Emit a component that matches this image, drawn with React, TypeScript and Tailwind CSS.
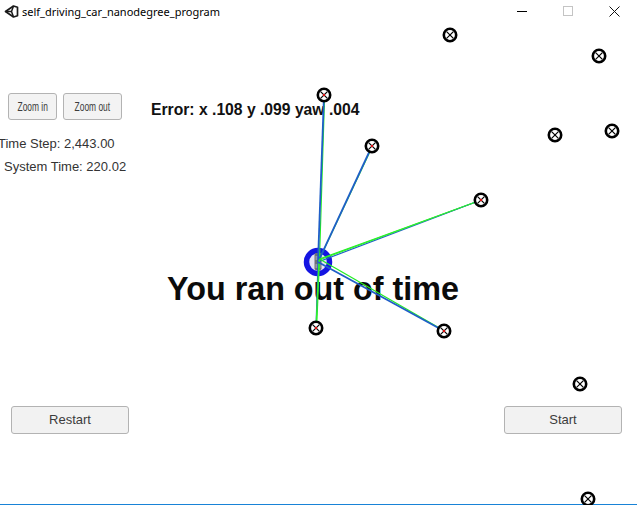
import React from 'react';

type Pt = [number, number];

const CAR: Pt = [318, 262];

// landmarks observed by the car (get the blue/green rays)
const SEEN: Pt[] = [
  [324, 95],
  [372, 146],
  [481, 200],
  [316, 328],
  [444, 331],
];

const OTHERS: Pt[] = [
  [450, 35],
  [599, 56],
  [555, 135],
  [612, 131],
  [580, 384],
  [588, 499],
];

function Landmark({ p, seen }: { p: Pt; seen?: boolean }) {
  const [x, y] = p;
  return (
    <g>
      <circle cx={x} cy={y} r={6.2} fill="#fff" stroke="#000" strokeWidth={2.6} />
      <line x1={x - 3.4} y1={y - 3.4} x2={x + 3.4} y2={y + 3.4} stroke="#000" strokeWidth={1.2} />
      <line x1={x - 3.4} y1={y + 3.4} x2={x + 3.4} y2={y - 3.4} stroke="#000" strokeWidth={1.2} />
      {seen && <circle cx={x} cy={y} r={1.2} fill="#e01010" />}
    </g>
  );
}

function Scene() {
  return (
    <svg className="absolute inset-0 z-10 pointer-events-none" width={637} height={505}>
      {OTHERS.map((p, i) => (
        <Landmark key={i} p={p} />
      ))}
      {/* car */}
      <circle cx={CAR[0]} cy={CAR[1]} r={11.5} fill="#e4e4f4" stroke="#1414e2" strokeWidth={5.5} />
      <rect x={314.5} y={253} width={7} height={17} rx={1.5} fill="#6f7078" />
      <rect x={315.5} y={256} width={5} height={4} fill="#9a9aa2" />
      <rect x={315.5} y={264} width={5} height={4} fill="#9a9aa2" />
      {/* rays */}
      {SEEN.map(([x, y], i) => (
        <g key={i}>
          <line x1={CAR[0] + 1.5} y1={CAR[1] - 3} x2={x + 0.6} y2={y} stroke="#22ee22" strokeWidth={1.2} />
          <line x1={CAR[0]} y1={CAR[1]} x2={x} y2={y} stroke="#1f5ec8" strokeWidth={i === 2 || i === 3 ? 1.2 : 1.8} />
          {(i === 2 || i === 3) && (
            <line x1={CAR[0] + 1} y1={CAR[1] - 2} x2={x} y2={y} stroke="#2ef02e" strokeWidth={1.2} />
          )}
        </g>
      ))}
      {SEEN.map((p, i) => (
        <Landmark key={i} p={p} seen />
      ))}
    </svg>
  );
}

function UnityIcon() {
  return (
    <svg width="15" height="15" viewBox="0 0 15 15" className="ml-[4px]">
      <path
        d="M1.5 7.5 L9.5 2 L13.5 3.2 L13.5 11.8 L9.5 13 Z"
        fill="none"
        stroke="#1a1a1a"
        strokeWidth="1.7"
        strokeLinejoin="round"
      />
      <path d="M1.5 7.5 L7.5 7.5 L9.5 2 M7.5 7.5 L9.5 13" fill="none" stroke="#1a1a1a" strokeWidth="1.5" />
    </svg>
  );
}

function TitleBar() {
  return (
    <div className="flex h-[22px] items-center">
      <UnityIcon />
      <span className="ml-[3px] text-[11px] leading-none text-black [font-family:'Noto_Sans',sans-serif]">
        self_driving_car_nanodegree_program
      </span>
      <div className="ml-auto flex h-full">
        <div className="flex w-[46px] items-center justify-center">
          <div className="h-px w-[10px] bg-black" />
        </div>
        <div className="flex w-[46px] items-center justify-center">
          <div className="h-[10px] w-[10px] border border-[#c4c4c4]" />
        </div>
        <div className="flex w-[46px] items-center justify-center">
          <svg width="11" height="11" viewBox="0 0 11 11">
            <path d="M0.5 0.5 L10.5 10.5 M10.5 0.5 L0.5 10.5" stroke="#111" strokeWidth="1" />
          </svg>
        </div>
      </div>
    </div>
  );
}

function SmallButton({ label, w }: { label: string; w: string }) {
  return (
    <button
      className={`flex h-[27px] ${w} items-center justify-center rounded-[3px] border border-[#b3b3b3] bg-[#f3f3f3] text-[#3c3c3c]`}
    >
      <span className="inline-block origin-center scale-x-[0.7] text-[12px] leading-none">{label}</span>
    </button>
  );
}

function WideButton({ label }: { label: string }) {
  return (
    <button className="flex h-[28px] w-[118px] items-center justify-center rounded-[3px] border border-[#b3b3b3] bg-[#f2f2f2] text-[13px] text-[#3c3c3c]">
      {label}
    </button>
  );
}

export default function App() {
  return (
    <div className="relative h-[505px] w-[637px] overflow-hidden bg-white [font-family:'Liberation_Sans',Arial,sans-serif]">
      <TitleBar />

      <div className="mt-[71px] flex items-start pl-[8px]">
        <div className="flex gap-[6px]">
          <SmallButton label="Zoom in" w="w-[49px]" />
          <SmallButton label="Zoom out" w="w-[59px]" />
        </div>
        <p className="ml-[29px] mt-[8px] text-[15.7px] font-bold leading-[18px] text-[#111]">
          Error: x .108 y .099 yaw .004
        </p>
      </div>

      <p className="ml-[-2px] mt-[16px] text-[13px] leading-[16px] text-[#333]">Time Step: 2,443.00</p>
      <p className="ml-[4px] mt-[7px] text-[13px] leading-[16px] text-[#333]">System Time: 220.02</p>

      <p className="mt-[96px] pr-[11px] text-center text-[32.3px] font-bold leading-[36px] text-[#0b0b0b]">
        You ran out of time
      </p>

      <div className="mt-[99px] flex justify-between pl-[11px] pr-[15px]">
        <WideButton label="Restart" />
        <WideButton label="Start" />
      </div>

      <div className="mt-[70px] h-px bg-[#1883d7]" />

      <Scene />
    </div>
  );
}
